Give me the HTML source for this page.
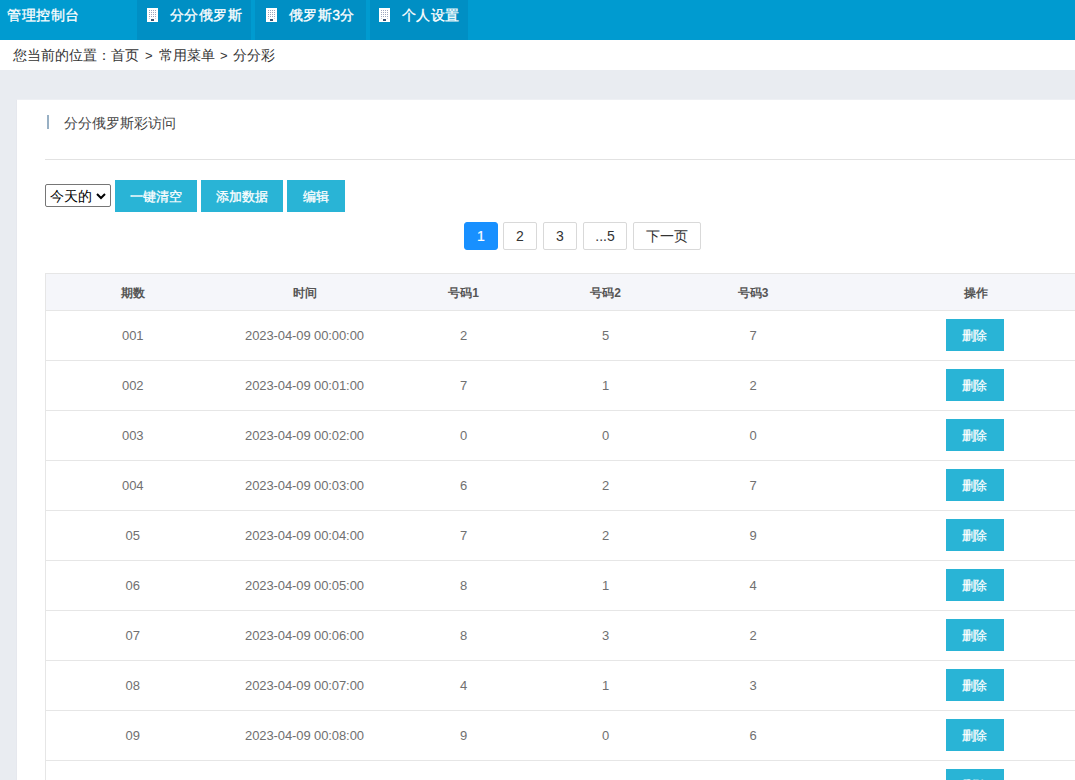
<!DOCTYPE html>
<html>
<head>
<meta charset="utf-8">
<style>
*{margin:0;padding:0;box-sizing:border-box;}
html,body{width:1075px;height:780px;overflow:hidden;}
body{font-family:"Liberation Sans",sans-serif;background:#e9ecf1;position:relative;color:#333;}
.abs{position:absolute;}
#hdr{left:0;top:0;width:1075px;height:40px;background:#009bd0;}
#brand{left:7px;top:6px;font-size:14px;line-height:18px;color:#fff;white-space:nowrap;font-weight:500;letter-spacing:0.5px;-webkit-text-stroke:0.3px #fff;}
.nav{top:0;height:40px;background:#008fc4;}
.nav .ic{position:absolute;top:8px;}
.nav .tx{position:absolute;top:6px;font-size:14px;line-height:18px;color:#fff;white-space:nowrap;font-weight:500;letter-spacing:0.4px;-webkit-text-stroke:0.3px #fff;}
.sep{display:inline-block;width:18.4px;text-align:center;font-style:normal;font-size:13px;}
#crumb{left:0;top:40px;width:1075px;height:30px;background:#fff;}
#crumb span{position:absolute;left:13px;top:6px;font-size:14px;line-height:18px;color:#333;white-space:nowrap;}
#card{left:16px;top:99px;width:1100px;height:700px;background:#fff;border-left:1px solid #e6e8ee;border-top:1px solid #eef0f4;}
#bar{left:47px;top:115px;width:2px;height:14px;background:#98b0c4;}
#title{left:64px;top:114px;font-size:14px;line-height:18px;color:#444;white-space:nowrap;}
#hr{left:45px;top:159px;width:1040px;height:1px;background:#e2e2e2;}
#sel{left:45px;top:184px;width:66px;height:23px;border:1px solid #767676;border-radius:2px;background:#fff;}
#sel span{position:absolute;left:4px;top:2px;font-size:14px;line-height:18px;color:#000;}
#sel svg{position:absolute;left:50px;top:8px;}
.btn{top:180px;height:32px;background:#29b4d6;color:#fff;font-size:12.5px;font-weight:500;line-height:35px;-webkit-text-stroke:0.3px #fff;text-align:center;white-space:nowrap;}
.pg{top:222px;height:28px;border:1px solid #d9d9d9;border-radius:2px;background:#fff;color:#333;font-size:14px;line-height:26px;text-align:center;white-space:nowrap;}
.pg.on{background:#1890ff;border-color:#1890ff;color:#fff;border-radius:3px;-webkit-text-stroke:0.2px #fff;}
#tbl{left:45px;top:273px;width:1073px;border-collapse:collapse;table-layout:fixed;}
#tbl td,#tbl th{text-align:center;border-top:1px solid #e6e6e6;border-bottom:1px solid #e6e6e6;padding:0;}
#tbl th{height:37px;padding-top:2px;background:#f5f6fa;font-size:12px;color:#555;font-weight:bold;}
#tbl td{height:50px;font-size:13px;color:#707070;letter-spacing:-0.1px;}
#tbl tr>*:first-child{border-left:1px solid #e6e6e6;}
.del{display:block;position:relative;left:-1px;top:-1px;margin:0 auto;width:58px;height:32px;line-height:34px;background:#29b4d6;color:#fff;font-size:12.5px;font-weight:500;-webkit-text-stroke:0.2px #fff;}
</style>
</head>
<body>
<div id="hdr" class="abs"></div>
<div id="brand" class="abs">管理控制台</div>

<div class="abs nav" style="left:137px;width:114px;"><svg class="ic" style="left:10px;" width="11" height="14" viewBox="0 0 11 14"><rect width="11" height="14" fill="#fff"/><g fill="#9ea7bf"><rect x="2" y="2" width="1" height="1"/><rect x="4" y="2" width="1" height="1"/><rect x="6" y="2" width="1" height="1"/><rect x="8" y="2" width="1" height="1"/><rect x="2" y="4" width="1" height="1"/><rect x="4" y="4" width="1" height="1"/><rect x="6" y="4" width="1" height="1"/><rect x="8" y="4" width="1" height="1"/><rect x="2" y="6" width="1" height="1"/><rect x="4" y="6" width="1" height="1"/><rect x="6" y="6" width="1" height="1"/><rect x="8" y="6" width="1" height="1"/><rect x="2" y="8" width="1" height="1"/><rect x="4" y="8" width="1" height="1"/><rect x="6" y="8" width="1" height="1"/><rect x="8" y="8" width="1" height="1"/><rect x="2" y="10" width="1" height="1" opacity=".5"/><rect x="8" y="10" width="1" height="1" opacity=".5"/></g><rect x="4" y="11" width="3" height="2" fill="#3b5575"/></svg><div class="tx" style="left:33px;">分分俄罗斯</div></div>
<div class="abs nav" style="left:255px;width:111px;"><svg class="ic" style="left:11px;" width="11" height="14" viewBox="0 0 11 14"><rect width="11" height="14" fill="#fff"/><g fill="#9ea7bf"><rect x="2" y="2" width="1" height="1"/><rect x="4" y="2" width="1" height="1"/><rect x="6" y="2" width="1" height="1"/><rect x="8" y="2" width="1" height="1"/><rect x="2" y="4" width="1" height="1"/><rect x="4" y="4" width="1" height="1"/><rect x="6" y="4" width="1" height="1"/><rect x="8" y="4" width="1" height="1"/><rect x="2" y="6" width="1" height="1"/><rect x="4" y="6" width="1" height="1"/><rect x="6" y="6" width="1" height="1"/><rect x="8" y="6" width="1" height="1"/><rect x="2" y="8" width="1" height="1"/><rect x="4" y="8" width="1" height="1"/><rect x="6" y="8" width="1" height="1"/><rect x="8" y="8" width="1" height="1"/><rect x="2" y="10" width="1" height="1" opacity=".5"/><rect x="8" y="10" width="1" height="1" opacity=".5"/></g><rect x="4" y="11" width="3" height="2" fill="#3b5575"/></svg><div class="tx" style="left:34px;">俄罗斯3分</div></div>
<div class="abs nav" style="left:370px;width:98px;"><svg class="ic" style="left:9px;" width="11" height="14" viewBox="0 0 11 14"><rect width="11" height="14" fill="#fff"/><g fill="#9ea7bf"><rect x="2" y="2" width="1" height="1"/><rect x="4" y="2" width="1" height="1"/><rect x="6" y="2" width="1" height="1"/><rect x="8" y="2" width="1" height="1"/><rect x="2" y="4" width="1" height="1"/><rect x="4" y="4" width="1" height="1"/><rect x="6" y="4" width="1" height="1"/><rect x="8" y="4" width="1" height="1"/><rect x="2" y="6" width="1" height="1"/><rect x="4" y="6" width="1" height="1"/><rect x="6" y="6" width="1" height="1"/><rect x="8" y="6" width="1" height="1"/><rect x="2" y="8" width="1" height="1"/><rect x="4" y="8" width="1" height="1"/><rect x="6" y="8" width="1" height="1"/><rect x="8" y="8" width="1" height="1"/><rect x="2" y="10" width="1" height="1" opacity=".5"/><rect x="8" y="10" width="1" height="1" opacity=".5"/></g><rect x="4" y="11" width="3" height="2" fill="#3b5575"/></svg><div class="tx" style="left:32px;">个人设置</div></div>

<div id="crumb" class="abs"><span>您当前的位置：首页<i class="sep" style="width:19.8px">&gt;</i>常用菜单<i class="sep" style="width:17.8px">&gt;</i>分分彩</span></div>

<div id="card" class="abs"></div>
<div id="bar" class="abs"></div>
<div id="title" class="abs">分分俄罗斯彩访问</div>
<div id="hr" class="abs"></div>

<div id="sel" class="abs"><span>今天的</span><svg width="10" height="7" viewBox="0 0 10 7"><path d="M1 1 L5 5 L9 1" fill="none" stroke="#000" stroke-width="2"/></svg></div>
<div class="abs btn" style="left:115px;width:82px;">一键清空</div>
<div class="abs btn" style="left:201px;width:82px;">添加数据</div>
<div class="abs btn" style="left:287px;width:58px;">编辑</div>

<div class="abs pg on" style="left:464px;width:34px;">1</div>
<div class="abs pg" style="left:503px;width:34px;">2</div>
<div class="abs pg" style="left:543px;width:34px;">3</div>
<div class="abs pg" style="left:583px;width:44px;">...5</div>
<div class="abs pg" style="left:633px;width:68px;">下一页</div>

<table id="tbl" class="abs">
<colgroup><col style="width:174px"><col style="width:170px"><col style="width:148px"><col style="width:136px"><col style="width:159px"><col style="width:286px"></colgroup>
<tr><th>期数</th><th>时间</th><th>号码1</th><th>号码2</th><th>号码3</th><th>操作</th></tr>
<tr><td>001</td><td>2023-04-09 00:00:00</td><td>2</td><td>5</td><td>7</td><td><span class="del">删除</span></td></tr>
<tr><td>002</td><td>2023-04-09 00:01:00</td><td>7</td><td>1</td><td>2</td><td><span class="del">删除</span></td></tr>
<tr><td>003</td><td>2023-04-09 00:02:00</td><td>0</td><td>0</td><td>0</td><td><span class="del">删除</span></td></tr>
<tr><td>004</td><td>2023-04-09 00:03:00</td><td>6</td><td>2</td><td>7</td><td><span class="del">删除</span></td></tr>
<tr><td>05</td><td>2023-04-09 00:04:00</td><td>7</td><td>2</td><td>9</td><td><span class="del">删除</span></td></tr>
<tr><td>06</td><td>2023-04-09 00:05:00</td><td>8</td><td>1</td><td>4</td><td><span class="del">删除</span></td></tr>
<tr><td>07</td><td>2023-04-09 00:06:00</td><td>8</td><td>3</td><td>2</td><td><span class="del">删除</span></td></tr>
<tr><td>08</td><td>2023-04-09 00:07:00</td><td>4</td><td>1</td><td>3</td><td><span class="del">删除</span></td></tr>
<tr><td>09</td><td>2023-04-09 00:08:00</td><td>9</td><td>0</td><td>6</td><td><span class="del">删除</span></td></tr>
<tr><td>10</td><td>2023-04-09 00:09:00</td><td>1</td><td>2</td><td>3</td><td><span class="del">删除</span></td></tr>
</table>
</body>
</html>
